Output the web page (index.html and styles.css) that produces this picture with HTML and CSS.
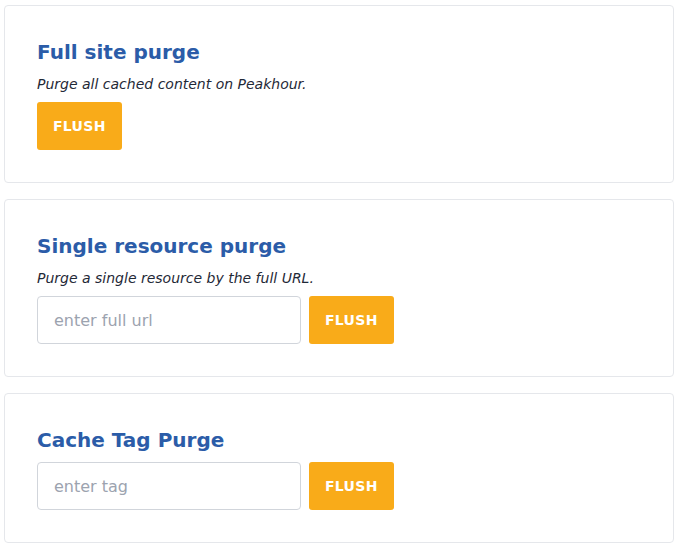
FILE: index.html
```html
<!DOCTYPE html>
<html lang="en">
<head>
<meta charset="utf-8">
<title>Purge</title>
<link rel="stylesheet" href="styles.css">
</head>
<body>
<main class="page">
  <section class="card">
    <h2 class="card-title">Full site purge</h2>
    <p class="card-desc">Purge all cached content on Peakhour.</p>
    <div class="row">
      <button class="btn" type="button">Flush</button>
    </div>
  </section>
  <section class="card">
    <h2 class="card-title">Single resource purge</h2>
    <p class="card-desc">Purge a single resource by the full URL.</p>
    <div class="row">
      <input class="field" type="text" placeholder="enter full url">
      <button class="btn" type="button">Flush</button>
    </div>
  </section>
  <section class="card">
    <h2 class="card-title">Cache Tag Purge</h2>
    <div class="row">
      <input class="field" type="text" placeholder="enter tag">
      <button class="btn" type="button">Flush</button>
    </div>
  </section>
</main>
</body>
</html>
```
FILE: styles.css
```css
* { box-sizing: border-box; }
html, body { margin: 0; padding: 0; background: #ffffff; }
body {
  font-family: "DejaVu Sans", sans-serif;
  color: #1f2937;
}
.page {
  padding: 5px 7px 0 4px;
  display: flex;
  flex-direction: column;
  gap: 16px;
}
.card {
  border: 1px solid #e5e7eb;
  border-radius: 4px;
  padding: 32px;
  background: #fff;
}
.card-title {
  margin: 0 0 8px;
  font-size: 20px;
  line-height: 28px;
  font-weight: bold;
  color: #2b5ca8;
}
.card-desc {
  margin: 0 0 8px;
  font-size: 14px;
  line-height: 20px;
  font-style: italic;
  color: #1f2937;
}
.row {
  display: flex;
  gap: 8px;
}
.field {
  width: 264px;
  height: 48px;
  border: 1px solid #d1d5db;
  border-radius: 4px;
  padding: 0 16px;
  font-family: "DejaVu Sans", sans-serif;
  font-size: 16px;
  color: #1f2937;
  outline: none;
}
.field::placeholder { color: #9ca3af; }
.btn {
  height: 48px;
  padding: 0 16px;
  border: 0;
  border-radius: 3px;
  background: #f9ab19;
  color: #fff;
  font-family: "DejaVu Sans", sans-serif;
  font-size: 14px;
  font-weight: bold;
  text-transform: uppercase;
  letter-spacing: 0.3px;
}
```
